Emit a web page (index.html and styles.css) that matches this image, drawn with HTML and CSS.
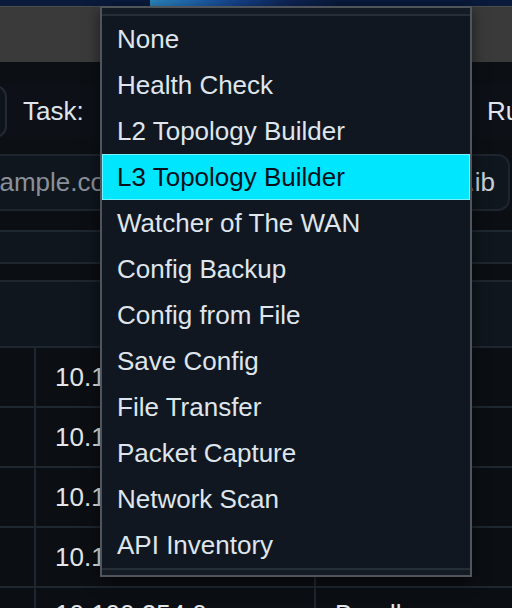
FILE: index.html
```html
<!DOCTYPE html>
<html lang="en">
<head>
<meta charset="utf-8">
<title>Task picker</title>
<link rel="stylesheet" href="styles.css">
</head>
<body>
<div class="page">
  <div class="topbar"></div>
  <div class="titlebar"></div>
  <div class="content">
    <div class="toolbar">
      <div class="side-box"></div>
      <span class="label task-label">Task:</span>
      <div class="select-space"></div>
      <span class="label run-label">Run</span>
    </div>
    <div class="inputs">
      <div class="field field-host">example.com</div>
      <div class="field field-lib">data.ib</div>
    </div>
    <div class="band"></div>
    <div class="panel panel-a"></div>
    <div class="band band-2"></div>
    <div class="panel panel-b"></div>
    <div class="table">
      <div class="row"><div class="cell c1"></div><div class="cell c2">10.100.1.1</div><div class="cell c3">Ready</div></div>
      <div class="row"><div class="cell c1"></div><div class="cell c2">10.100.1.2</div><div class="cell c3">Ready</div></div>
      <div class="row"><div class="cell c1"></div><div class="cell c2">10.100.1.3</div><div class="cell c3">Ready</div></div>
      <div class="row"><div class="cell c1"></div><div class="cell c2">10.100.1.4</div><div class="cell c3">Ready</div></div>
      <div class="row row-last"><div class="cell c1"></div><div class="cell c2">10.100.254.0</div><div class="cell c3">Bundle</div></div>
    </div>
  </div>
  <div class="menu">
    <ul class="menu-list">
      <li class="item">None</li>
      <li class="item">Health Check</li>
      <li class="item">L2 Topology Builder</li>
      <li class="item item-active">L3 Topology Builder</li>
      <li class="item">Watcher of The WAN</li>
      <li class="item">Config Backup</li>
      <li class="item">Config from File</li>
      <li class="item">Save Config</li>
      <li class="item">File Transfer</li>
      <li class="item">Packet Capture</li>
      <li class="item">Network Scan</li>
      <li class="item">API Inventory</li>
    </ul>
  </div>
</div>
</body>
</html>
```

FILE: styles.css
```css
* { box-sizing: border-box; }
html, body {
  margin: 0;
  padding: 0;
  background: #0c1015;
}
body {
  font-family: "Liberation Sans", Arial, Helvetica, sans-serif;
  font-size: 26px;
  color: #dfe5ec;
}
.page {
  position: relative;
  width: 512px;
  height: 608px;
  overflow: hidden;
  background: #0c1015;
}
.topbar {
  height: 6px;
  background: linear-gradient(90deg, #0a1a3b 0, #0a1a3b 150px, #2b87bd 150px, #1f64ad 195px, #143f86 240px, #0d2454 290px, #0a1a3b 340px);
}
.titlebar {
  height: 56px;
  background: #3a3a3b;
  border-top: 1px solid #4c4c4e;
}
.content {
  display: flex;
  flex-direction: column;
}
.toolbar {
  display: flex;
  align-items: center;
  height: 53px;
  margin-top: 23px;
  background: #0d1117;
}
.side-box {
  flex: none;
  width: 40px;
  height: 53px;
  margin-left: -33px;
  border: 2px solid #232a33;
  border-radius: 12px;
  background: #0f141b;
}
.label {
  flex: none;
  white-space: nowrap;
  color: #dfe5ec;
}
.task-label { margin-left: 16px; }
.select-space { flex: 1; }
.run-label {
  width: 25px;
  overflow: visible;
}
.inputs {
  display: flex;
  height: 57px;
  margin-top: 16px;
  gap: 40px;
}
.field {
  flex: none;
  height: 57px;
  display: flex;
  align-items: center;
  border: 2px solid #1e252e;
  border-radius: 12px;
  background: #10161e;
  white-space: nowrap;
  overflow: hidden;
}
.field-host {
  width: 340px;
  margin-left: -44px;
  padding-left: 14px;
  color: #8a9099;
}
.field-lib {
  width: 170px;
  margin-left: auto;
  margin-right: 2px;
  justify-content: flex-end;
  padding-right: 13px;
  color: #c9d0d8;
}
.band {
  height: 19px;
  background: #0b0e12;
}
.band-2 { height: 16px; }
.panel {
  background: #10161e;
  border-top: 2px solid #1e2630;
}
.panel-a {
  height: 34px;
  border-bottom: 2px solid #1e2630;
}
.panel-b { height: 66px; }
.table {
  border-top: 2px solid #1e2630;
}
.row {
  display: grid;
  grid-template-columns: 36px 280px 1fr;
  height: 60px;
  border-bottom: 2px solid #1e2630;
  background: #0b0e13;
}
.cell {
  display: flex;
  align-items: center;
  white-space: nowrap;
  color: #e2e6ea;
  border-right: 2px solid #1e2630;
}
.c2 { padding-left: 19px; }
.c3 { padding-left: 19px; border-right: none; }
.row-last .cell {
  align-items: flex-start;
  padding-top: 11px;
}
.row-last .c1 { padding-top: 0; }

.menu {
  position: absolute;
  left: 100px;
  top: 6px;
  width: 372px;
  height: 571px;
  padding: 6px 0 5px;
  background: #151b24;
  border: 2px solid #50555c;
  box-shadow: 0 4px 14px rgba(0, 0, 0, 0.55);
}
.menu-list {
  list-style: none;
  margin: 0;
  padding: 0;
  background: #111720;
  border-top: 2px solid #262e38;
  border-bottom: 2px solid #262e38;
}
.item {
  height: 46px;
  line-height: 46px;
  padding-left: 15px;
  white-space: nowrap;
  color: #dfe5ec;
}
.item-active {
  background: #00e6ff;
  color: #05101a;
  box-shadow: inset 0 0 0 1px #78f2ff;
}
```
